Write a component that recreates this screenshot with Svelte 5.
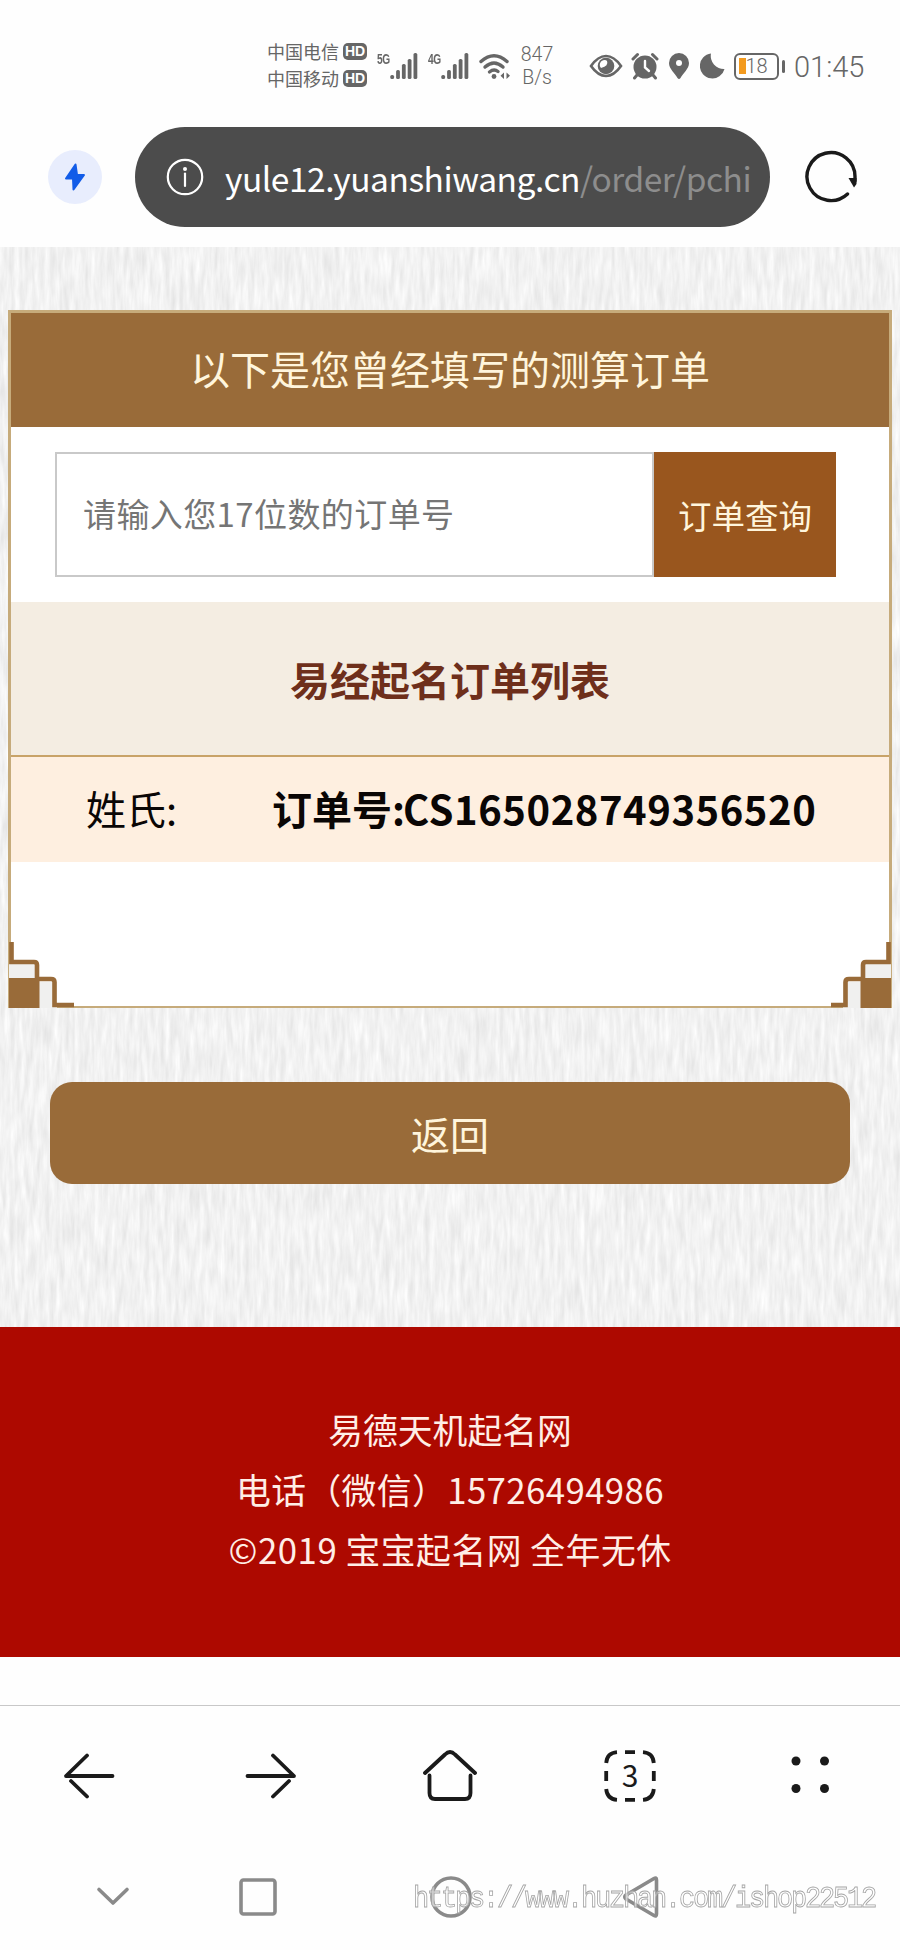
<script>
let orderNo = '';
let host = 'yule12.yuanshiwang.cn';
let path = '/order/pchi';
let tabCount = 3;

let carriers = ['中国电信', '中国移动'];
let networks = ['5G', '4G'];

let orders = [
    { surname: '', number: 'CS165028749356520' }
];

let bars = [4, 9, 15, 20, 26];
</script>

<div class="phone">
    <div class="status">
        <div class="carriers">
            {#each carriers as carrier}
                <div class="carrier">{carrier}<span class="hd">HD</span></div>
            {/each}
        </div>
        {#each networks as network}
            <div class="network">
                <span class="gen">{network}</span>
                <svg width="28" height="28" viewBox="0 0 28 28">
                    {#each bars as bar, i}
                        <rect x={i * 5.8 + 0.3} y={27 - bar} width="3.8" height={bar} rx="1.6" fill="#666" />
                    {/each}
                </svg>
            </div>
        {/each}
        <svg class="wifi" width="32" height="28" viewBox="0 0 32 28" fill="none" stroke="#666" stroke-width="3.4" stroke-linecap="round">
            <path d="M2 9.500Q15 -2 28 9.500" />
            <path d="M6 15Q15 7 24 15" />
            <path d="M10.500 20Q15 16.500 19 19.500" />
            <circle cx="15" cy="24.500" r="2.400" fill="#666" stroke="none" />
            <path d="M25 20.500V27L21.500 23.700ZM27.500 20.500V27L31 23.700Z" fill="#666" stroke="none" />
        </svg>
        <div class="speed"><span>847</span><span>B/s</span></div>
        <svg class="eye" width="34" height="26" viewBox="0 0 34 26">
            <path d="M2 13Q9 3 17 3T32 13Q25 23 17 23T2 13Z" fill="none" stroke="#666" stroke-width="2.600" />
            <circle cx="17" cy="13" r="8.300" fill="#666" />
            <path d="M12 8.500Q16 6 18 8Q20 13 12 15Q9.500 12 12 8.500Z" fill="#fff" />
        </svg>
        <svg class="alarm" width="28" height="28" viewBox="0 0 28 28">
            <circle cx="14" cy="15" r="11.500" fill="#666" />
            <path d="M2 7L6.500 2.500M26 7L21.500 2.500M6 23L3.500 26M22 23L24.500 26" stroke="#666" stroke-width="3" stroke-linecap="round" />
            <path d="M14 9V15.500L18 19" fill="none" stroke="#fff" stroke-width="2.400" stroke-linecap="round" />
        </svg>
        <svg class="pin" width="22" height="28" viewBox="0 0 22 28">
            <path d="M11 1A10 10 0 0 1 21 11C21 17 15 21 12.500 26Q11 28 9.500 26C7 21 1 17 1 11A10 10 0 0 1 11 1Z" fill="#666" />
            <circle cx="11" cy="11" r="3" fill="#fff" />
        </svg>
        <svg class="moon" width="25" height="26" viewBox="0 0 25 26">
            <path d="M11 0.500A13 13 0 0 0 24.500 16A12.500 12.500 0 1 1 11 0.500Z" fill="#666" />
        </svg>
        <div class="battery"><span>18</span></div>
        <div class="clock">01:45</div>
    </div>

    <div class="toolbar">
        <div class="bolt">
            <svg width="22" height="28" viewBox="0 0 22 28">
                <path d="M11.500 1.500L2 15.500H9L9.500 26.500L20 12H13Z" fill="#125ce8" stroke="#125ce8" stroke-width="2" stroke-linejoin="round" />
            </svg>
        </div>
        <div class="address">
            <svg width="38" height="38" viewBox="0 0 38 38">
                <circle cx="19" cy="19" r="17.200" fill="none" stroke="#fff" stroke-width="2.200" />
                <circle cx="19" cy="11" r="2" fill="#fff" />
                <path d="M19 15.500V28" stroke="#fff" stroke-width="2.200" stroke-linecap="round" />
            </svg>
            <span class="url">{host}<span class="dim">{path}</span></span>
        </div>
        <svg class="reload" width="54" height="54" viewBox="0 0 54 54">
            <path d="M43.500 44A24 24 0 1 1 51 27V31" fill="none" stroke="#1a1a1a" stroke-width="3.400" stroke-linecap="round" />
            <path d="M44.500 28H52.500V34L50 37.500Z" fill="#1a1a1a" />
        </svg>
    </div>

    <div class="page">
        <svg class="paper" width="900" height="1080">
            <filter id="grain" x="0" y="0" width="100%" height="100%" color-interpolation-filters="sRGB">
                <feTurbulence type="fractalNoise" baseFrequency="0.2 0.03" numOctaves="3" seed="4" />
                <feColorMatrix values="0.13 0 0 0 0.882  0.13 0 0 0 0.882  0.13 0 0 0 0.882  0 0 0 0 1" />
            </filter>
            <rect width="900" height="1080" filter="url(#grain)" />
        </svg>

        <div class="card">
            <h1>以下是您曾经填写的测算订单</h1>
            <div class="search">
                <input type="text" placeholder="请输入您17位数的订单号" bind:value={orderNo} />
                <button class="query">订单查询</button>
            </div>
            <h2>易经起名订单列表</h2>
            {#each orders as order}
                <div class="order">
                    <span class="surname">姓氏:{order.surname}</span>
                    <b>订单号:<span class="digits">{order.number}</span></b>
                </div>
            {/each}
            {#each ['left', 'right'] as side}
                <svg class="corner {side}" width="66" height="66" viewBox="0 0 66 66">
                    <path d="M0 22H28V40H48V66H0Z" fill="#f0f0ef" />
                    <path d="M2.500 0V20H25Q28 20 28 23V37H42Q45.500 37 45.500 40V63H{side === 'left' ? 65 : 60}" fill="none" stroke="#996b39" stroke-width="4.600" />
                    <rect y="36" width="30.500" height="30" fill="#996b39" />
                </svg>
            {/each}
        </div>

        <button class="back">返回</button>
    </div>

    <footer>
        <p class="site">易德天机起名网</p>
        <p class="tel">电话（微信）15726494986</p>
        <p class="copy">©2019 宝宝起名网 全年无休</p>
    </footer>

    <div class="gap"></div>

    <nav class="browser">
        <svg width="54" height="54" viewBox="0 0 54 54"><path d="M49.500 27H3L24 6.500M8 32L24 47.500" /></svg>
        <svg width="54" height="54" viewBox="0 0 54 54"><path d="M4.500 27H51L30 6.500M46 32L30 47.500" /></svg>
        <svg width="54" height="54" viewBox="0 0 54 54"><path d="M2 24L22 5.500Q27 0.500 32 5.500L52 24M6.500 26.500V44Q6.500 50 12 50H42Q47.500 50 47.500 44V26.500" /></svg>
        <div class="tabs">
            <svg width="54" height="54" viewBox="0 0 54 54">
                <path class="dash" d="M3.200 14Q4 4 14 3.200M40 3.200Q50 4 50.800 14M50.800 40Q50 50 40 50.800M14 50.800Q4 50 3.200 40M22 3.200H32M22 50.800H32M3.200 22V32M50.800 22V32" />
            </svg>
            <span>{tabCount}</span>
        </div>
        <svg class="dots" width="54" height="54" viewBox="0 0 54 54">
            <circle cx="13" cy="12" r="4.500" /><circle cx="41.500" cy="12" r="4.500" />
            <circle cx="13" cy="39.500" r="4.500" /><circle cx="41.500" cy="39.500" r="4.500" />
        </svg>
    </nav>

    <nav class="system">
        <svg width="44" height="44" viewBox="0 0 44 44"><path d="M8 14.500L22 28L36 14.500" /></svg>
        <svg width="44" height="44" viewBox="0 0 44 44"><rect x="5" y="5" width="34" height="34" rx="2.500" /></svg>
        <svg width="44" height="44" viewBox="0 0 44 44"><circle cx="22" cy="22" r="19" /></svg>
        <svg width="44" height="44" viewBox="0 0 44 44"><path d="M36.500 5Q36.500 2 34 3.500L6 20Q3.500 22 6 24L34 40.500Q36.500 42 36.500 39Z" /></svg>
        <span class="mark">https://www.huzhan.com/ishop22512</span>
    </nav>
</div>

<style>
    :global(body) {
        margin: 0;
        background: #fff;
    }

    .phone {
        width: 900px;
        height: 1950px;
        overflow: hidden;
        background: #fefefe;
        font-family: "Noto Sans CJK SC", "Noto Sans", sans-serif;
    }

    svg {
        display: block;
        flex: none;
    }

    .status {
        display: flex;
        align-items: center;
        height: 110px;
        padding: 22px 0 0 267px;
        box-sizing: border-box;
        color: #666;
    }

    .carriers {
        width: 110px;
        margin-top: -3px;
    }

    .carrier {
        display: flex;
        align-items: center;
        gap: 4px;
        height: 27px;
        font-size: 18px;
        font-weight: 400;
        white-space: nowrap;
    }

    .hd {
        width: 24px;
        height: 17px;
        border-radius: 5px;
        background: #666;
        color: #fff;
        font: bold 14px/17px "Liberation Sans", sans-serif;
        text-align: center;
    }

    .network {
        display: flex;
        width: 51px;
    }

    .gen {
        width: 13px;
        font: bold 15px/13px "Liberation Sans", sans-serif;
        letter-spacing: -0.5px;
        transform: scaleX(0.68);
        transform-origin: 0 0;
        flex: none;
    }

    .speed {
        display: flex;
        flex-direction: column;
        width: 52px;
        margin-right: 26px;
        font: 300 19.5px/23px Roboto, sans-serif;
        text-align: center;
    }

    .eye {
        margin-right: 8px;
    }

    .alarm {
        margin-right: 9px;
    }

    .pin {
        margin-right: 10px;
    }

    .moon {
        margin-right: 9px;
    }

    .battery {
        position: relative;
        width: 45px;
        height: 27px;
        border: 2.5px solid #666;
        border-radius: 6px;
        box-sizing: border-box;
        background: linear-gradient(#f39a1e, #f39a1e) 3px 3px / 7px 16px no-repeat;
        font: 300 20px/22px Roboto, sans-serif;
        text-align: center;
    }

    .battery::after {
        content: "";
        position: absolute;
        right: -8px;
        top: 5px;
        width: 3px;
        height: 13px;
        border-radius: 2px;
        background: #666;
    }

    .clock {
        margin: 2px 0 0 15px;
        font: 300 29px/30px Roboto, sans-serif;
    }

    .toolbar {
        display: flex;
        align-items: center;
        height: 137px;
        padding: 17px 0 20px 48px;
        box-sizing: border-box;
    }

    .bolt {
        display: flex;
        align-items: center;
        justify-content: center;
        width: 54px;
        height: 54px;
        margin-right: 33px;
        border-radius: 50%;
        background: #e8edfd;
    }

    .address {
        display: flex;
        align-items: center;
        width: 635px;
        height: 100px;
        padding-left: 31px;
        box-sizing: border-box;
        border-radius: 50px;
        background: #4c4c4c;
        color: #fff;
    }

    .url {
        margin: 2px 0 0 21px;
        font: 33.5px/44px "Noto Sans CJK SC", sans-serif;
        letter-spacing: -0.48px;
        white-space: nowrap;
    }

    .dim {
        color: #8d8d8d;
    }

    .reload {
        margin-left: 34px;
    }

    .page {
        position: relative;
        height: 1080px;
        padding-top: 63px;
        box-sizing: border-box;
    }

    .paper {
        position: absolute;
        inset: 0;
    }

    .card {
        position: relative;
        width: 884px;
        height: 698px;
        margin: 0 auto;
        border: 3px solid #c6ab7b;
        border-bottom-width: 2px;
        box-sizing: border-box;
        background: #fff;
    }

    h1 {
        margin: 0;
        height: 114px;
        background: #996b39;
        color: #fff5dc;
        font-size: 40px;
        font-weight: 400;
        line-height: 110px;
        text-align: center;
    }

    .search {
        display: flex;
        height: 125px;
        padding: 25px 0 25px 44px;
    }

    input {
        width: 599px;
        padding: 0 0 3px 26px;
        border: 2px solid #c9c9c9;
        box-sizing: border-box;
        background: #fff;
        font: 33px/48px "Noto Sans CJK SC", sans-serif;
        letter-spacing: 0.4px;
    }

    input::placeholder {
        color: #757575;
        opacity: 1;
    }

    button {
        padding: 0;
        border: none;
        color: #fff5dc;
        font-family: inherit;
    }

    .query {
        width: 182px;
        background: #99561e;
        font-size: 33.5px;
    }

    h2 {
        margin: 0;
        height: 155px;
        border-bottom: 2px solid #c8a368;
        box-sizing: border-box;
        background: #f4ede2;
        color: #6e2f1b;
        font-size: 40px;
        line-height: 154px;
        text-align: center;
    }

    .order {
        display: flex;
        align-items: center;
        height: 105px;
        padding: 0 0 3px 75px;
        box-sizing: border-box;
        background: #feefe0;
        color: #0a0605;
        font-size: 40px;
    }

    .surname {
        width: 186px;
        font-weight: 400;
    }

    .digits {
        margin-left: -2px;
        letter-spacing: 0.55px;
    }

    .corner {
        position: absolute;
        bottom: -2px;
    }

    .left {
        left: -2px;
    }

    .right {
        right: -2px;
        transform: scaleX(-1);
    }

    .back {
        position: relative;
        display: block;
        width: 800px;
        height: 102px;
        margin: 74px auto 0;
        border-radius: 22px;
        background: #996b39;
        font-size: 39px;
        line-height: 102px;
    }

    footer {
        height: 330px;
        padding-top: 72px;
        box-sizing: border-box;
        background: #ad0900;
        color: #ffeee6;
        font-size: 34.8px;
        line-height: 60px;
        text-align: center;
    }

    footer p {
        margin: 0;
    }

    .tel {
        letter-spacing: 0.4px;
    }

    .copy {
        letter-spacing: 0.5px;
    }

    .gap {
        height: 49px;
        border-bottom: 1px solid #c8c8c8;
        box-sizing: border-box;
    }

    .browser {
        display: grid;
        grid-template-columns: repeat(5, 180px);
        place-items: center;
        height: 140px;
        fill: none;
        stroke: #1a1a1a;
        stroke-width: 3.8;
        stroke-linecap: round;
        stroke-linejoin: round;
    }

    .dash {
        stroke-linecap: butt;
    }

    .tabs {
        display: grid;
        place-items: center;
    }

    .tabs > * {
        grid-area: 1 / 1;
    }

    .tabs span {
        margin-top: -4px;
        color: #1a1a1a;
        font-size: 30px;
        line-height: 54px;
        font-weight: 400;
    }

    .dots {
        fill: #1a1a1a;
        stroke: none;
    }

    .system {
        position: relative;
        display: grid;
        grid-template-columns: 145px 145px 241px 141px;
        justify-items: center;
        padding: 29px 0 0 40px;
        fill: none;
        stroke: #8a8a8a;
        stroke-width: 3.6;
        stroke-linecap: round;
        stroke-linejoin: round;
    }

    .mark {
        position: absolute;
        left: 413px;
        top: 36px;
        color: rgba(255, 255, 255, 0.6);
        font: 27px/34px "Liberation Mono", monospace;
        letter-spacing: -2.2px;
        -webkit-text-stroke: 0.8px #a5a5a5;
        white-space: nowrap;
        transform: scaleY(1.12);
    }
</style>
